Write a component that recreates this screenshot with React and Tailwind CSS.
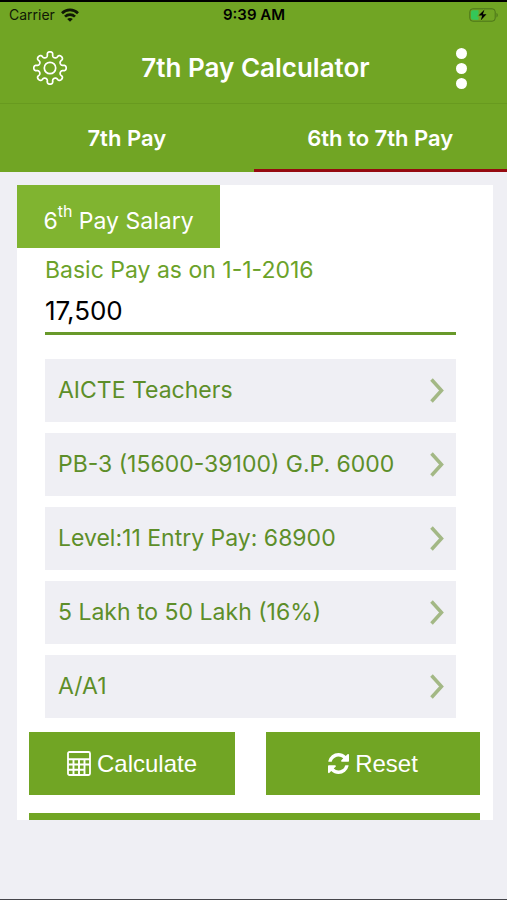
import React, { useState } from "react";

const SELECTS = [
  { id: "category", label: "Category", value: "AICTE Teachers" },
  { id: "payBand", label: "Pay band", value: "PB-3 (15600-39100) G.P. 6000" },
  { id: "level", label: "Level", value: "Level:11 Entry Pay: 68900" },
  { id: "hra", label: "City population", value: "5 Lakh to 50 Lakh (16%)" },
  { id: "ta", label: "Transport class", value: "A/A1" },
];

// Outline of a cog with 8 rounded teeth, centred on 0,0
const gearPath = () => {
  const points = [];
  for (let i = 0; i < 240; i++) {
    const t = (i / 240) * Math.PI * 2;
    // the second term flattens the tips and steepens the sides of the teeth
    const a = t + 0.05 * Math.sin(16 * t);
    const r = 13.7 + 2.5 * Math.cos(8 * t);
    points.push(`${(r * Math.sin(a)).toFixed(2)} ${(-r * Math.cos(a)).toFixed(2)}`);
  }
  return `M${points.join("L")}Z`;
};

const GearIcon = () => (
  <svg viewBox="-18 -18 36 36" className="size-9" fill="none" stroke="currentColor" strokeWidth="1.7" strokeLinejoin="round" aria-hidden="true">
    <path d={gearPath()} />
    <circle r="5.7" />
  </svg>
);

const WifiIcon = () => (
  <svg viewBox="0 0 18 14" className="h-[14px] w-[18px]" fill="none" stroke="currentColor" strokeWidth="2.7" aria-hidden="true">
    <path d="M1 5.2C5.500 .8 12.500 .8 17 5.200" />
    <path d="M4 8.600C6.800 5.900 11.200 5.900 14 8.600" />
    <path d="M9 13.800L6.200 11C7.800 9.500 10.200 9.500 11.800 11Z" fill="currentColor" stroke="none" />
  </svg>
);

const BatteryIcon = () => (
  <svg viewBox="0 0 30 14" className="h-[14px] w-[30px]" role="img" aria-label="Battery charging">
    <rect x=".8" y=".8" width="25.400" height="12.400" rx="3" fill="none" stroke="#4c741a" strokeWidth="1" />
    <path d="M27.500 5v4.400c1.600-.6 1.600-3.800 0-4.400z" fill="#4c741a" />
    <path d="M4 2.300h5.500v9.400H4a2 2 0 0 1-2-2V4.300a2 2 0 0 1 2-2z" fill="#34c759" />
    <path d="M15.500 1.500L9.500 7.600h3.700L11.700 12.500 17.500 6.200h-3.600z" fill="#000" stroke="#71a524" strokeWidth="1.600" paintOrder="stroke" />
  </svg>
);

const CalculatorIcon = () => (
  <svg viewBox="0 0 24 25" className="h-[25px] w-6" fill="none" stroke="currentColor" aria-hidden="true">
    <rect x="1" y="1" width="22" height="23" rx="1.500" strokeWidth="1.800" />
    <path d="M1 8.300h22M1 13.500h22M1 18.700h16.500M6.500 8v16M12 8v16M17.500 8v16" strokeWidth="1.900" />
  </svg>
);

const RefreshIcon = () => (
  <svg viewBox="128 128 1536 1536" className="size-[21px]" fill="currentColor" aria-hidden="true">
    <path d="M1639 1056q0 5-1 7-64 268-268 434.500t-478 166.500q-146 0-282.500-55t-243.500-157l-129 129q-19 19-45 19t-45-19-19-45v-448q0-26 19-45t45-19h448q26 0 45 19t19 45-19 45l-137 137q71 66 161 102t187 36q134 0 250-65t186-179q11-17 53-117 8-23 30-23h192q13 0 22.500 9.500t9.500 22.500zm25-800v448q0 26-19 45t-45 19h-448q-26 0-45-19t-19-45 19-45l138-138q-148-137-349-137-134 0-250 65t-186 179q-11 17-53 117-8 23-30 23h-199q-13 0-22.500-9.500t-9.500-22.500v-7q65-268 270-434.500t480-166.500q146 0 284 55.500t245 156.500l130-129q19-19 45-19t45 19 19 45z" />
  </svg>
);

const ChevronIcon = () => (
  <svg viewBox="0 0 14 26" className="pointer-events-none col-start-1 row-start-1 mr-3 h-[26px] w-[14px] justify-self-end" fill="none" stroke="#a3b885" strokeWidth="3.5" aria-hidden="true">
    <path d="M1.500 1.500L11.500 12.500 1.500 23.500" />
  </svg>
);

export default function App() {
  const [basicPay, setBasicPay] = useState("17,500");

  return (
    <div className="flex min-h-screen flex-col border-t-2 border-b border-t-black border-b-[#45454a] bg-[#efeff4] font-['Inter','Liberation_Sans',sans-serif]">
      <header className="bg-[#71a524] text-white">
        {/* Status bar */}
        <div className="grid h-[25px] grid-cols-3 items-center pr-2 pl-[9px] text-sm text-[#101806]">
          <div className="flex items-center gap-[6px]">
            <span>Carrier</span>
            <WifiIcon />
          </div>
          <span className="text-center text-[15px] font-semibold text-black">9:39 AM</span>
          <div className="flex justify-end">
            <BatteryIcon />
          </div>
        </div>

        {/* Title bar */}
        <div className="flex h-[77px] items-center justify-between border-b border-[#689a1f] pt-2 pr-7 pb-[2px] pl-8">
          <button type="button" aria-label="Settings">
            <GearIcon />
          </button>
          <h1 className="text-[26px] leading-8 font-semibold">7th Pay Calculator</h1>
          <button type="button" aria-label="More options" className="flex w-9 flex-col items-center gap-1">
            <span className="size-[11px] rounded-full bg-white" />
            <span className="size-[11px] rounded-full bg-white" />
            <span className="size-[11px] rounded-full bg-white" />
          </button>
        </div>

        <nav className="grid h-[68px] grid-cols-2 text-[22px] font-semibold" role="tablist">
          <button type="button" role="tab" aria-selected="false" className="border-b-3 border-[#71a524] pt-[3px]">
            7th Pay
          </button>
          <button type="button" role="tab" aria-selected="true" className="border-b-3 border-[#960a10] pt-[3px]">
            6th to 7th Pay
          </button>
        </nav>
      </header>

      <main className="mt-[13px] mr-[14px] ml-[17px] bg-white">
        <h2 className="flex h-[63px] w-[203px] items-center justify-center bg-[#80b430] pt-[10px] text-[23px] text-white">
          <span>
            6<sup className="-top-[12px] text-base leading-none">th</sup> Pay Salary
          </span>
        </h2>

        <form onSubmit={(e) => e.preventDefault()}>
          <div className="mr-[37px] ml-7">
            <label htmlFor="basicPay" className="block pt-[6px] text-[23px] leading-8 text-[#6ba229]">
              Basic Pay as on 1-1-2016
            </label>
            <input
              id="basicPay"
              type="text"
              value={basicPay}
              onChange={(e) => setBasicPay(e.target.value)}
              className="block h-[49px] w-full border-b-3 border-[#68992a] pt-[3px] text-[26px] text-black outline-none"
            />

            <div className="mt-6 flex flex-col gap-[11px]">
              {SELECTS.map(({ id, label, value }) => (
                <div key={id} className="grid items-center">
                  <select
                    id={id}
                    aria-label={label}
                    className="col-start-1 row-start-1 h-[63px] w-full appearance-none bg-[#efeff4] pr-8 pl-[13px] text-[23px] text-[#5d8e29] outline-none"
                  >
                    <option>{value}</option>
                  </select>
                  <ChevronIcon />
                </div>
              ))}
            </div>
          </div>

          <div className="mt-[14px] mr-[13px] ml-3 flex gap-[31px] font-['Liberation_Sans',Arial,sans-serif] text-2xl text-white">
            <button type="submit" className="flex h-[63px] flex-[206] items-center justify-center gap-[6px] bg-[#71a524]">
              <CalculatorIcon />
              Calculate
            </button>
            <button type="reset" onClick={() => setBasicPay("")} className="flex h-[63px] flex-[214] items-center justify-center gap-[6px] bg-[#71a524]">
              <RefreshIcon />
              Reset
            </button>
          </div>
        </form>

        <div className="mt-[18px] mr-[13px] ml-3 h-[7px] bg-[#71a524]" />
      </main>
    </div>
  );
}
